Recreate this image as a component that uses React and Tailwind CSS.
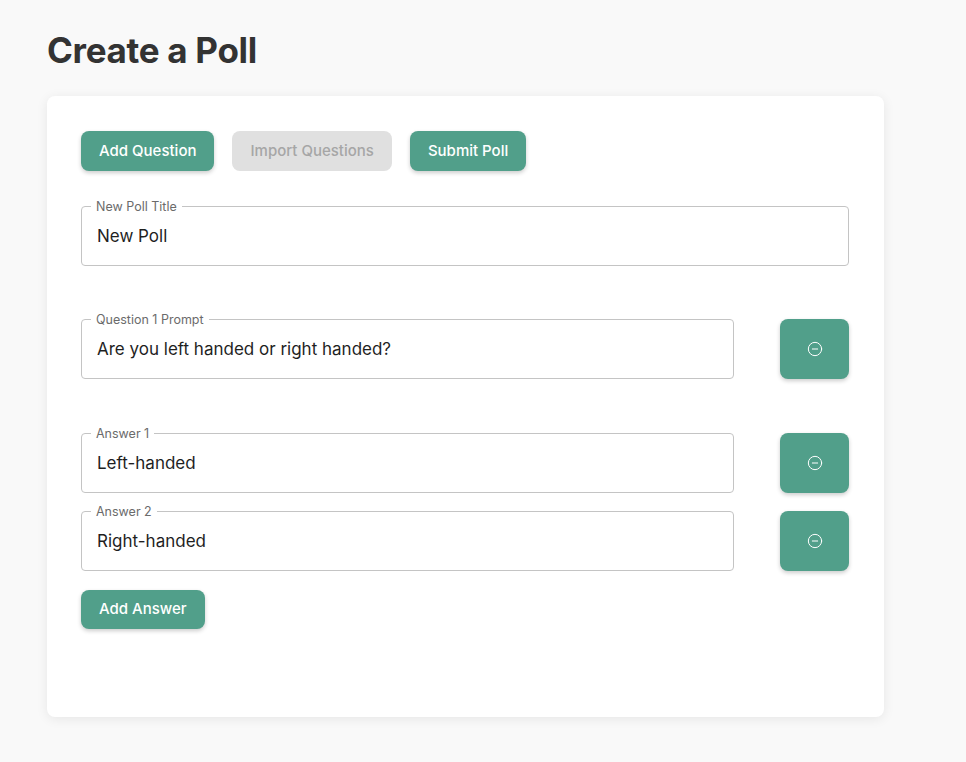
import { CircleMinus } from "lucide-react";

const answers = [
  { label: "Answer 1", value: "Left-handed" },
  { label: "Answer 2", value: "Right-handed" },
];

function OutlinedField({ label, value }) {
  return (
    <div className="relative h-[60px] flex-1 rounded-[4px] border border-[#c4c4c4] bg-white">
      <span className="absolute -top-[8px] left-[9px] bg-white px-[5px] text-[12.5px] leading-4 text-[#6b6b6b]">
        {label}
      </span>
      <input
        defaultValue={value}
        className="h-full w-full bg-transparent px-[15px] text-[17px] text-[#1f1f1f] outline-none"
      />
    </div>
  );
}

function RemoveButton() {
  return (
    <button className="flex h-[60px] w-[69px] shrink-0 items-center justify-center rounded-lg bg-[#519f8a] text-white shadow-[0_2px_4px_rgba(0,0,0,0.2)]">
      <CircleMinus size={16} strokeWidth={1.5} />
    </button>
  );
}

const greenButton =
  "h-10 rounded-lg bg-[#519f8a] px-[18px] text-[15px] font-medium text-white shadow-[0_2px_4px_rgba(0,0,0,0.2)]";

export default function App() {
  return (
    <div
      className="min-h-screen bg-[#f9f9f9] pb-[45px] pt-[26px]"
      style={{ fontFamily: "Inter, 'Noto Sans', sans-serif" }}
    >
      <h1 className="ml-[47px] text-[35px] font-bold leading-[48px] tracking-[-0.3px] text-[#333333]">
        Create a Poll
      </h1>

      <div className="ml-[47px] mt-[22px] w-[837px] rounded-lg bg-white pb-[88px] pl-[34px] pr-[35px] pt-[35px] shadow-[0_2px_12px_rgba(0,0,0,0.08)]">
        <div className="flex gap-[18px]">
          <button className={greenButton}>Add Question</button>
          <button className="h-10 rounded-lg bg-[#e0e0e0] px-[18px] text-[15px] font-medium text-[#a6a6a6]">
            Import Questions
          </button>
          <button className={greenButton}>Submit Poll</button>
        </div>

        <div className="mt-[35px] flex">
          <OutlinedField label="New Poll Title" value="New Poll" />
        </div>

        <div className="mt-[53px] flex gap-[46px]">
          <OutlinedField
            label="Question 1 Prompt"
            value="Are you left handed or right handed?"
          />
          <RemoveButton />
        </div>

        <div className="mt-[54px] flex flex-col gap-[18px]">
          {answers.map((answer) => (
            <div key={answer.label} className="flex gap-[46px]">
              <OutlinedField label={answer.label} value={answer.value} />
              <RemoveButton />
            </div>
          ))}
        </div>

        <button className={`${greenButton} mt-[19px] h-[39px]`}>Add Answer</button>
      </div>
    </div>
  );
}
